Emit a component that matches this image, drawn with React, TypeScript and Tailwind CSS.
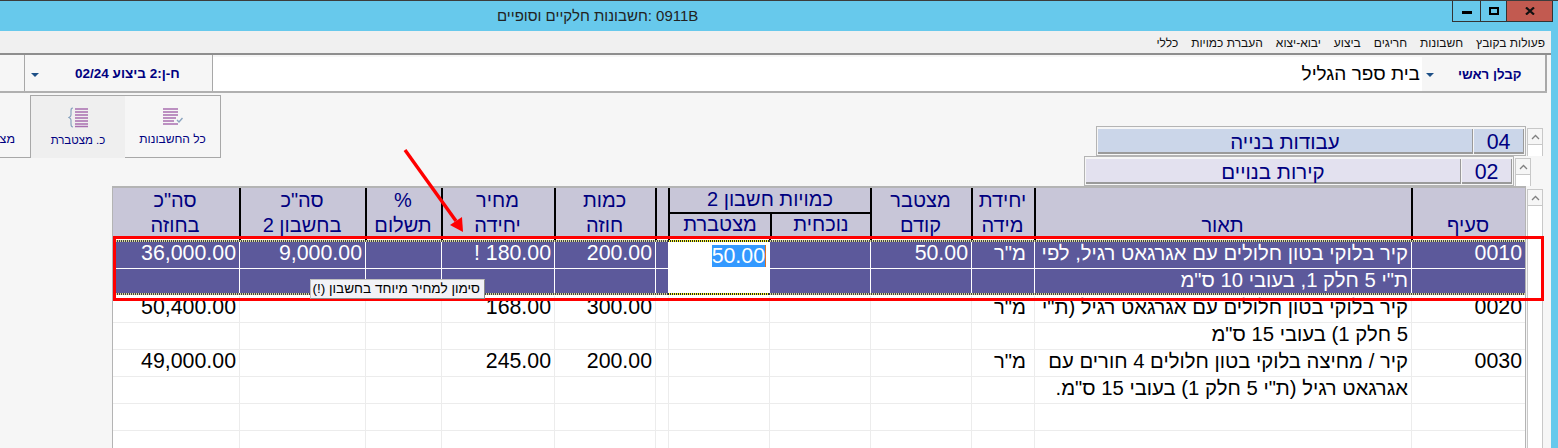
import React from "react";

const widths = [126, 126, 76, 113, 101, 13, 101, 101, 101, 63, 377, 114];
const font = "[font-family:'Liberation_Sans',Arial,sans-serif]";
const dots = "bg-[repeating-linear-gradient(90deg,#444_0,#444_1px,#d8d8a0_1px,#d8d8a0_2px)]";
const yellowDots = "bg-[repeating-linear-gradient(90deg,#222_0,#222_1px,#ffff33_1px,#ffff33_2px)]";

function Cell({ w, children, className = "" }: { w: number; children?: React.ReactNode; className?: string }) {
  return (
    <div dir="rtl" style={{ width: w }} className={`shrink-0 overflow-hidden whitespace-nowrap px-[3px] text-right leading-[23px] ${className}`}>
      {children}
    </div>
  );
}

type RowData = React.ReactNode[];

function DataRow({ data, selected }: { data: RowData; selected?: boolean }) {
  return (
    <div className={`flex h-[27px] ${selected ? "bg-[#5c599b] text-white" : "text-black"}`}>
      {widths.map((w, i) => {
        const editing = selected && i === 6;
        const hebrew = i === 9 || i === 10;
        return (
          <Cell
            key={i}
            w={w}
            className={`${i === 0 ? "" : "border-l"} ${selected ? "border-b border-white" : "border-b border-[#ececec]"} ${editing ? "bg-white text-black" : ""} ${hebrew ? "text-[20.3px]" : "text-[21.33px]"}`}
          >
            {data[i]}
          </Cell>
        );
      })}
    </div>
  );
}

function Head({ w, a, b, first }: { w: number; a?: string; b?: string; first?: boolean }) {
  return (
    <div dir="rtl" style={{ width: w }} className={`flex shrink-0 flex-col items-center pr-[2px] text-[20px] leading-[25px] text-[#000080] ${first ? "" : "border-l-2 border-l-black"}`}>
      <div className="h-[25px]">{a}</div>
      <div className="h-[23px]">{b}</div>
    </div>
  );
}

function Scroll({ track, className = "" }: { track: string; className?: string }) {
  return (
    <div className={`w-4 shrink-0 border-x border-[#c8c8c8] bg-white ${track} ${className}`}>
      <div className="flex h-[17px] items-center justify-center border-y border-[#c8c8c8] bg-[#f6f6f6]">
        <svg width="9" height="6" viewBox="0 0 9 6"><path d="M1 5 L4.5 1.5 L8 5" fill="none" stroke="#808080" strokeWidth="1.3" /></svg>
      </div>
    </div>
  );
}

function Section({ code, name, bg, ml, track }: { code: string; name: string; bg: string; ml: string; track: string }) {
  const text = `h-[25px] border-b-2 border-r border-[#9a9a9a] text-center text-[#000080] leading-[26px] ${bg}`;
  return (
    <div className={`flex h-[30px] items-start ${ml}`}>
      <div className="flex h-[30px] w-[430px] gap-px border border-[#b4b4b4] px-[1px] pt-[2px]">
        <div dir="rtl" className={`w-[375px] text-[20.5px] ${text}`}>{name}</div>
        <div className={`w-[50px] text-[21.33px] ${text}`}>{code}</div>
      </div>
      <Scroll track={track} className="ml-[1px] mt-[2px]" />
    </div>
  );
}

export default function App() {
  const row1: RowData = [
    "36,000.00", "9,000.00", "", <span key="p">180.00 !</span>, "200.00", "",
    <span key="e" dir="ltr" className="mt-[3px] inline-block border-r border-r-[#e07020] bg-[#3399ff] leading-[22px] text-white">50.00</span>, "", "50.00",
    <span key="u" className="pr-[5px]">מ"ר</span>,
    "קיר בלוקי בטון חלולים עם אגרגאט רגיל, לפי", "0010",
  ];
  const row1b: RowData = ["", "", "", "", "", "", "", "", "", "", 'ת"י 5 חלק 1, בעובי 10 ס"מ', ""];
  const row2: RowData = ["50,400.00", "", "", "168.00", "300.00", "", "", "", "", <span key="u" className="pr-[5px]">מ"ר</span>, 'קיר בלוקי בטון חלולים עם אגרגאט רגיל (ת"י', "0020"];
  const row2b: RowData = ["", "", "", "", "", "", "", "", "", "", '5 חלק 1) בעובי 15 ס"מ', ""];
  const row3: RowData = ["49,000.00", "", "", "245.00", "200.00", "", "", "", "", <span key="u" className="pr-[5px]">מ"ר</span>, "קיר / מחיצה בלוקי בטון חלולים 4 חורים עם", "0030"];
  const row3b: RowData = ["", "", "", "", "", "", "", "", "", "", 'אגרגאט רגיל (ת"י 5 חלק 1) בעובי 15 ס"מ.', ""];
  const empty: RowData = Array(12).fill("");

  return (
    <div className={`relative h-[448px] w-[1558px] overflow-hidden bg-[#67c9ec] ${font}`}>
      {/* title bar */}
      <div className="h-[1px] bg-[#3c3c3c]" />
      <div className="flex h-[30px] items-start">
        <div dir="rtl" className="ml-[497px] mt-[5px] text-[15px] leading-[20px] text-[#222]">0911B :חשבונות חלקיים וסופיים</div>
        <div className="ml-auto mr-[5px] flex h-[21px] border border-t-0 border-[#333]">
          <div className="flex w-[28px] items-center justify-center border-r border-[#333]"><div className="mt-[3px] h-[3px] w-[10px] bg-black" /></div>
          <div className="flex w-[26px] items-center justify-center border-r border-[#333]"><div className="h-[8px] w-[10px] border-2 border-black" /></div>
          <div className="flex w-[45px] items-center justify-center bg-[#c25a50]">
            <svg width="10" height="8" viewBox="0 0 10 8"><path d="M1 0.5 L9 7.5 M9 0.5 L1 7.5" stroke="#111" strokeWidth="2.2" /></svg>
          </div>
        </div>
      </div>

      {/* client area */}
      <div className="h-[417px] w-[1551px] bg-[#f6f6f6]">
        {/* menu */}
        <div dir="rtl" className="flex h-[24px] items-center gap-[13px] border-b-2 border-[#8e8e8e] bg-[#f0f0f0] pr-[6px] pt-[1px] text-[12px] text-[#111]">
          {["פעולות בקובץ", "חשבונות", "חריגים", "ביצוע", "יבוא-יצוא", "העברת כמויות", "כללי"].map((m) => (
            <span key={m}>{m}</span>
          ))}
        </div>
        {/* selector bar */}
        <div className="mr-[4px] flex h-[38px] border-b-2 border-[#b0b0b0]">
          <div className="w-[25px] border-r border-[#a8a8a8]" />
          <div className="flex w-[188px] items-center border-r border-[#a8a8a8] pt-[3px]">
            <span className="ml-[6px] h-0 w-0 border-x-[4px] border-t-[4px] border-x-transparent border-t-[#1d4f86]" />
            <span dir="rtl" className="ml-[36px] text-[13.5px] font-bold text-[#000080]">ח-ן:2 ביצוע 02/24</span>
          </div>
          <div dir="rtl" className="mt-[2px] flex flex-1 items-center bg-white pr-[2px] text-[19px] text-black">בית ספר הגליל</div>
          <div className="flex w-[125px] items-center border-r-2 border-[#a8a8a8] pt-[3px]">
            <span className="ml-[4px] h-0 w-0 border-x-[4px] border-t-[4px] border-x-transparent border-t-[#1d4f86]" />
            <span dir="rtl" className="ml-[24px] text-[13.33px] font-bold text-[#000080]">קבלן ראשי</span>
          </div>
        </div>

        {/* main body */}
        <div className="relative flex h-[355px]">
          {/* tabs */}
          <div className="absolute left-0 top-[2px] flex h-[63px]">
            <div className="flex w-[30px] items-end border-b border-[#a8a8a8] pb-[8px]">
              <span dir="rtl" className="w-[15px] overflow-hidden text-[12.5px] text-[#000080]">מצ</span>
            </div>
            <div className="flex w-[95px] flex-col items-center border-l border-t border-[#a8a8a8] bg-[#efefef] pt-[11px]">
              <svg width="21" height="21" viewBox="0 0 21 21">
                <path d="M5 1 C3 1 3 2 3 4 V8 C3 9.5 2 10 1 10.5 C2 11 3 11.5 3 13 V17 C3 19 3 20 5 20" fill="none" stroke="#8aa4bf" strokeWidth="1.2" />
                <path d="M7 2h13M7 5h13M7 8h13M7 11h13M7 14h13M7 17h13M7 19.5h13" stroke="#a96fb0" strokeWidth="1.6" />
              </svg>
              <span dir="rtl" className="mt-[3px] text-[11.5px] leading-[18px] text-[#000080]">כ. מצטברת</span>
            </div>
            <div className="flex w-[96px] flex-col items-center border-b border-r border-t border-[#a8a8a8] pt-[12px]">
              <svg width="20" height="19" viewBox="0 0 20 19">
                <path d="M0 1h15M0 4h15M0 7h15M0 10h13M0 13h11M0 16h15" stroke="#a96fb0" strokeWidth="1.6" />
                <path d="M14 12l2 2 3.5-4" fill="none" stroke="#8aa4bf" strokeWidth="1.4" />
              </svg>
              <span dir="rtl" className="mt-[3px] text-[12px] leading-[18px] text-[#000080]">כל החשבונות</span>
            </div>
          </div>

          {/* sections */}
          <div className="ml-[1084px] mt-[33px] flex flex-col">
            <Section code="04" name="עבודות בנייה" bg="bg-[#cbd6e9]" ml="ml-[12px]" track="h-[28px]" />
            <Section code="02" name="קירות בנויים" bg="bg-[#e3e1ef]" ml="" track="h-[28px]" />
          </div>

          {/* table */}
          <div className="absolute left-[112px] top-[93px] flex">
            <div className="w-[1414px] border-x border-t-2 border-[#b4b4b4] bg-white">
              <div className="flex h-[48px] bg-[#c8c6d8]">
                <Head w={126} a={'סה"כ'} b="בחוזה" first />
                <Head w={126} a={'סה"כ'} b="בחשבון 2" />
                <Head w={76} a="%" b="תשלום" />
                <Head w={113} a="מחיר" b="יחידה" />
                <Head w={101} a="כמות" b="חוזה" />
                <div className="w-[13px] shrink-0 border-l-2 border-black" />
                <div className="w-[202px] shrink-0 border-l-2 border-black">
                  <div dir="rtl" className="h-[26px] border-b-2 border-black text-center text-[20px] leading-[23px] text-[#000080]">כמויות חשבון 2</div>
                  <div className="flex h-[22px]">
                    <div dir="rtl" className="w-[100px] text-center text-[20px] leading-[21px] text-[#000080]">מצטברת</div>
                    <div dir="rtl" className="w-[100px] border-l-2 border-black text-center text-[20px] leading-[21px] text-[#000080]">נוכחית</div>
                  </div>
                </div>
                <Head w={101} a="מצטבר" b="קודם" />
                <Head w={63} a="יחידת" b="מידה" />
                <Head w={377} a="" b="תאור" />
                <Head w={114} a="" b="סעיף" />
              </div>

              {/* ticks under the header */}
              <div className="flex h-[6px]">
                {widths.map((w, i) => (
                  <div key={i} style={{ width: w }} className={`shrink-0 ${i === 0 ? "" : "border-l-2 border-black"}`} />
                ))}
              </div>

              {/* selected record */}
              <div className="relative">
                <DataRow data={row1} selected />
                <DataRow data={row1b} selected />
                <div className={`absolute inset-x-0 -top-[2px] h-[2px] ${dots}`}>
                  <div className={`absolute left-[555px] top-0 h-[2px] w-[101px] ${yellowDots}`} />
                </div>
                <div className={`absolute inset-x-0 bottom-[1px] h-[2px] ${dots}`}>
                  <div className={`absolute left-[555px] top-0 h-[2px] w-[101px] ${yellowDots}`} />
                </div>
              </div>

              <DataRow data={row2} />
              <DataRow data={row2b} />
              <DataRow data={row3} />
              <DataRow data={row3b} />
              <DataRow data={empty} />
              <DataRow data={empty} />
            </div>
            <Scroll track="h-[262px]" className="ml-[1px] mt-[3px]" />
          </div>

          {/* red highlight */}
          <div className="pointer-events-none absolute left-[113px] top-[143px] h-[65px] w-[1431px] border-[3px] border-[#ff0000]" />

          {/* tooltip */}
          <div dir="rtl" className="absolute left-[310px] top-[186px] h-[20px] w-[175px] whitespace-nowrap border border-[#c0c0c0] border-b-[#8a8a8a] border-r-[#8a8a8a] bg-[#f2f2f7] px-[4px] text-[13.6px] leading-[18px] text-black">
            סימון למחיר מיוחד בחשבון (!)
          </div>
        </div>
      </div>

      {/* arrow */}
      <svg className="pointer-events-none absolute left-[400px] top-[145px]" width="70" height="90" viewBox="0 0 70 90">
        <path d="M5 5 L56 76" stroke="#ff0000" strokeWidth="3.4" fill="none" />
        <path d="M63 87 L50 80 L62 72 Z" fill="#ff0000" />
      </svg>
    </div>
  );
}
